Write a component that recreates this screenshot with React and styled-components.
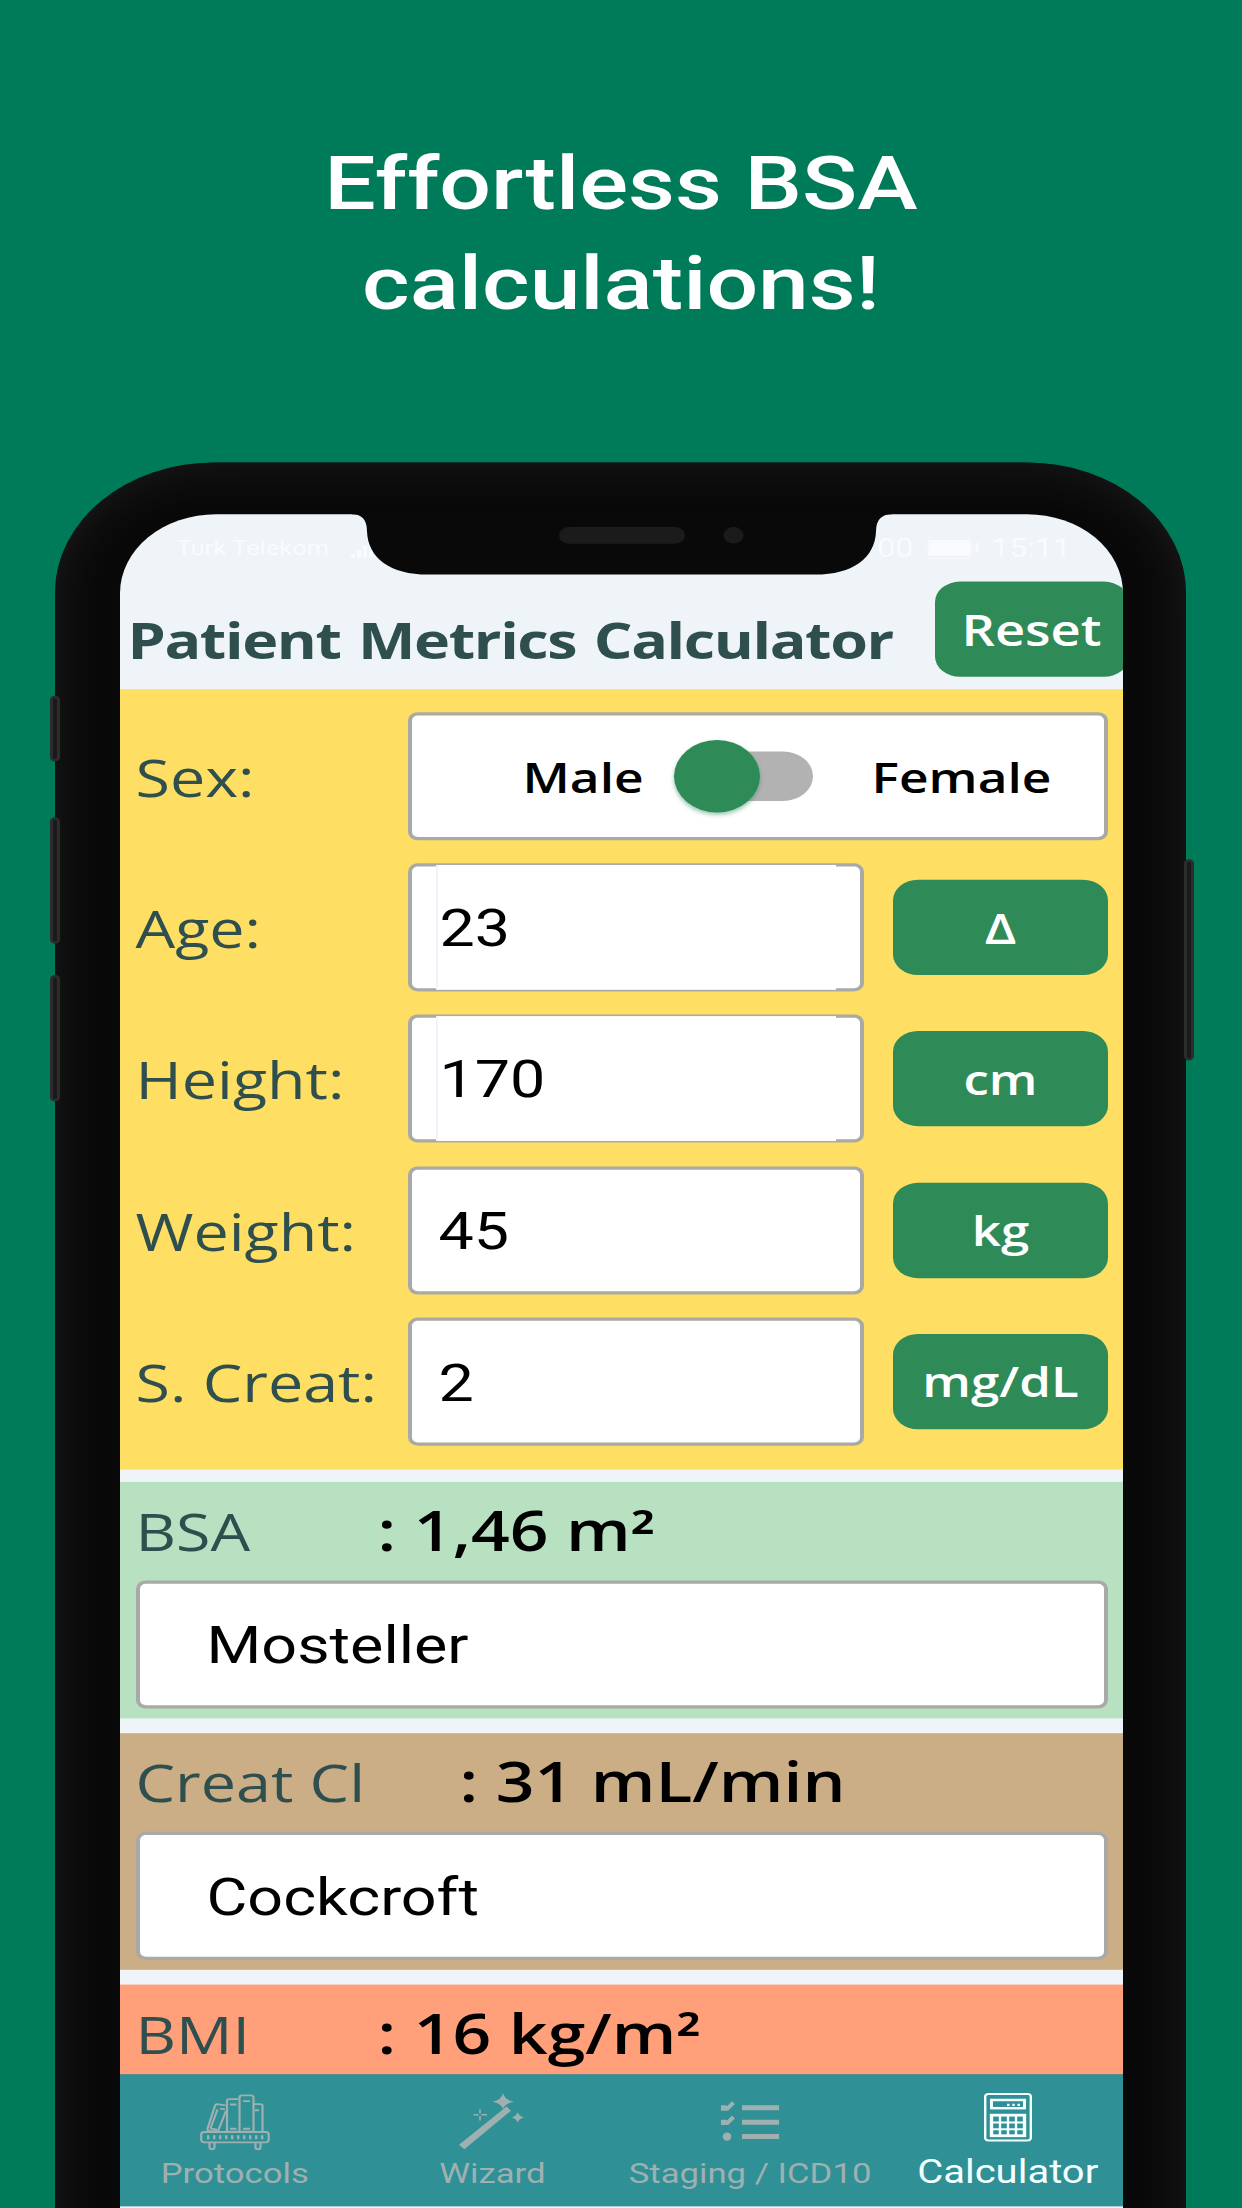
import React from "react";
import styled, { createGlobalStyle } from "styled-components";

const GlobalStyle = createGlobalStyle`
  * { box-sizing: border-box; }
  html, body { margin: 0; padding: 0; background: #007b5a; }
`;

const sans = `"Open Sans", "Noto Sans", sans-serif`;
const roboto = `Roboto, "Liberation Sans", sans-serif`;
const slate = "#2f4f4f";
const green = "#2e8b57";

/* The artwork is laid out at 1242x2688 and squeezed to a 1242x2208 poster. */
const Poster = styled.div`
  width: 1242px;
  height: 2208px;
  overflow: hidden;
  background: #007b5a;
`;

const Artwork = styled.main`
  width: 1242px;
  height: 2688px;
  display: flex;
  flex-direction: column;
  transform: scaleY(0.82143);
  transform-origin: 0 0;
  overflow: hidden;
`;

const Headline = styled.h1`
  flex: none;
  margin: 0;
  height: 563px;
  padding-top: 162px;
  font: 500 91.2px/122px ${roboto};
  color: #fff;
  text-align: center;
  white-space: nowrap;
`;

const Phone = styled.section`
  position: relative;
  flex: none;
  width: 1131px;
  height: 2300px;
  margin-left: 54.5px;
  padding: 63px 62px 0 65px;
  border-radius: 159px 159px 0 0;
  background: #090909;
  box-shadow: inset 0 0 50px 2px #1c1c1c;
`;

const SideKey = styled.i`
  position: absolute;
  ${(p) => (p.$right ? "right: -8px;" : "left: -5px;")}
  top: ${(p) => p.$top}px;
  width: 10px;
  height: ${(p) => p.$h}px;
  border: 3px solid #2c2c2c;
  border-radius: 6px;
  background: #1a1a1a;
`;

const Notch = styled.svg`
  position: absolute;
  left: 297.5px;
  top: 62px;
  width: 540px;
  height: 76px;
`;

const Screen = styled.div`
  display: flex;
  flex-direction: column;
  width: 1003.5px;
  height: 2070px;
  border-radius: 96px 96px 0 0;
  background: #eff4f9;
  overflow: hidden;
`;

const StatusBar = styled.div`
  display: flex;
  align-items: center;
  flex: none;
  height: 82px;
  padding: 18px 52px 18px 57px;
  font: 25.5px/30px ${roboto};
  color: #f9fbfe;
`;

const Signal = styled.svg`
  margin-left: 22px;
`;

const Clock = styled.span`
  display: flex;
  align-items: center;
  gap: 12px;
  margin-left: auto;
  font-size: 32px;
`;

const TitleBar = styled.header`
  display: flex;
  flex: none;
  height: 131px;
  padding-left: 8px;
`;

const Title = styled.h2`
  flex: none;
  width: 807px;
  margin: 0;
  padding-top: 39px;
  font: 700 61px/64px ${sans};
  letter-spacing: -1.4px;
  word-spacing: 3px;
  color: ${slate};
  white-space: nowrap;
`;

const Button = styled.button`
  flex: none;
  width: ${(p) => p.$w || 215}px;
  height: 116px;
  padding: 0;
  border: 0;
  border-radius: 25px;
  background: ${green};
  color: #fff;
  font: 600 ${(p) => p.$size || 51}px/1 ${sans};
`;

const Form = styled.div`
  display: grid;
  grid-template-columns: 272px 456px 1fr;
  grid-auto-rows: 156px;
  row-gap: 28.2px;
  align-items: center;
  flex: none;
  height: 950px;
  padding: 28px 15px 0 16px;
  background: #ffde64;
`;

const Label = styled.label`
  padding-top: 2px;
  font: 62.8px/84px ${sans};
  color: ${slate};
  white-space: nowrap;
`;

const Field = styled.div`
  display: flex;
  align-items: center;
  height: 156px;
  padding: ${(p) => p.$drop ?? 4}px 0 0 ${(p) => p.$pad ?? 27}px;
  border: 4px solid #a9a9a5;
  border-radius: 10px;
  background: #fff;
  color: #000;
  font: 62.8px/80px ${roboto};
  ${(p) => p.$wide && "grid-column: span 2;"}
`;

const TextInput = styled.div`
  display: flex;
  align-items: center;
  align-self: stretch;
  width: 400px;
  margin: -2px 0 -2px 24px;
  padding: 4px 0 0 2px;
  border-left: 2px solid #eef4fb;
  background: #fff;
`;

const UnitCell = styled.div`
  display: flex;
  justify-content: flex-end;
`;

const SexName = styled.span`
  font: 600 51.4px/70px ${sans};
`;

const Track = styled.span`
  display: flex;
  align-items: center;
  width: 125px;
  height: 60px;
  margin: 0 59px 0 44px;
  border-radius: 30px;
  background: #b2b2b2;
`;

const Thumb = styled.span`
  flex: none;
  width: 86px;
  height: 88px;
  margin-left: -14px;
  border-radius: 50%;
  background: ${green};
  box-shadow: 0 3px 5px rgba(46, 139, 87, 0.5);
`;

const Result = styled.section`
  flex: none;
  height: ${(p) => p.$h}px;
  margin-top: ${(p) => p.$gap}px;
  padding: 0 15px 0 16px;
  background: ${(p) => p.$bg};
`;

const ResultLine = styled.div`
  display: flex;
  align-items: baseline;
  height: 120px;
  padding-top: 13px;
`;

const ResultLabel = styled(Label)`
  width: ${(p) => p.$w}px;
  padding: 0;
`;

const ResultValue = styled.strong`
  font: 600 67.8px/90px ${sans};
  white-space: nowrap;
  color: #000;
`;

const Power = styled.span`
  line-height: 0;
  vertical-align: -7px;
`;

const TabBar = styled.nav`
  position: relative;
  display: grid;
  grid-template-columns: repeat(4, 1fr);
  flex: none;
  height: 161px;
  margin: 0 -13.5px;
  background: #2f9096;
  border-top: 1px solid #5b8a86;
`;

const Tab = styled.a`
  display: flex;
  flex-direction: column;
  align-items: center;
  padding-top: 22px;
  color: ${(p) => (p.$active ? "#f4ffff" : "#9fb0b0")};
  font: ${(p) => (p.$active ? 40 : 34.7)}px/46px ${roboto};
  white-space: nowrap;

  svg {
    display: block;
    height: 70px;
    margin-bottom: 4px;
  }
`;

const Books = () => (
  <svg width="70" height="70" viewBox="0 0 70 70" fill="none" stroke="currentColor" strokeWidth="2.2">
    <rect x="1.2" y="47.5" width="67.5" height="12.5" rx="3" />
    <path d="M7 53.8H64" strokeWidth="5" strokeDasharray="2.4 3.6" />
    <path d="M9.5 60v6a2.5 2.5 0 0 0 5 0V60M55.5 60v6a2.5 2.5 0 0 0 5 0V60" />
    <path d="M27 47V9.500a2 2 0 0 1 2-2H38M27 47H54M39.500 47V5.500a2.500 2.500 0 0 1 2.500-2.500h9a2.500 2.500 0 0 1 2.500 2.500V47M54 13.500h6.500a2 2 0 0 1 2 2V47M30 14h6.500M30 43.500h6.500M43 10h7M43 43.500h7M55 21h4" />
    <path d="M17 13.500l8.500 1.500M17 13.500q-1.500 0-2 2L7.500 43.500q0 2.500 2 3H18L26 22M17.500 20L10.500 43M20 19l5 1M10 43l7 1.500" />
  </svg>
);

const Wand = () => (
  <svg width="66" height="70" viewBox="0 0 66 70" fill="currentColor">
    <path d="M0 63L47.500 16.500 52 21.500 5.300 68.500Z" />
    <path d="M44 0Q45.500 8.500 55 10.600Q45.500 12.500 44 20Q42.500 12.500 33.500 10.600Q42.500 8.500 44 0Z" />
    <path d="M58.700 23.500Q60 28.500 65 29.700Q60 31 58.700 36Q57.400 31 52.700 29.700Q57.400 28.500 58.700 23.500Z" />
    <path d="M21 20v5M21 28v5.500M14.500 26.500h5M22.500 26.500h5.500" stroke="currentColor" strokeWidth="1.600" />
  </svg>
);

const Checklist = () => (
  <svg width="58" height="70" viewBox="0 0 58 70" fill="currentColor">
    <path d="M21 15h37v6H21zM21 32.500h37v6H21zM21 50h37v6H21z" />
    <path d="M0 15h5l1 1 5-6 3 3.500L7 21.500H0zM0 32.500h5l1 1 5-6 3 3.500L7 39H0z" />
    <ellipse cx="6" cy="53" rx="4.300" ry="5" />
  </svg>
);

const Calc = () => (
  <svg width="48" height="70" viewBox="0 0 48 70" fill="none" stroke="currentColor">
    <rect x="1.200" y="1.200" width="45.600" height="56.600" rx="3" strokeWidth="2.400" />
    <rect x="7.500" y="8.500" width="33" height="10" strokeWidth="3" />
    <path d="M23 14.500h13" strokeWidth="2.600" strokeDasharray="2.600 2.600" />
    <rect x="7.500" y="27" width="33" height="25" strokeWidth="3.400" />
    <path d="M16 27v26M24 27v26M32 27v26M8 36h32M8 44h32" strokeWidth="2.400" />
  </svg>
);

const measures = [
  { label: "Age:", value: "23", unit: "Δ", editable: true },
  { label: "Height:", value: "170", unit: "cm", editable: true },
  { label: "Weight:", value: "45", unit: "kg" },
  { label: "S. Creat:", value: "2", unit: "mg/dL" },
];

const results = [
  { label: "BSA", value: ": 1,46 m", power: "²", formula: "Mosteller", bg: "#b7e1c0", h: 288, gap: 15, w: 242 },
  { label: "Creat Cl", value: ": 31 mL/min", formula: "Cockcroft", bg: "#cbae85", h: 288, gap: 18, w: 324 },
  { label: "BMI", value: ": 16 kg/m", power: "²", bg: "#ffa07a", h: 108.5, gap: 18, w: 242 },
];

export default function App() {
  return (
    <Poster>
      <GlobalStyle />
      <Artwork>
        <Headline>
          Effortless BSA
          <br />
          calculations!
        </Headline>
        <Phone>
          <SideKey $top={284} $h={80} />
          <SideKey $top={432} $h={154} />
          <SideKey $top={624} $h={154} />
          <SideKey $right $top={483} $h={245} />
          <Screen>
            <StatusBar>
              Turk Telekom
              <Signal width="30" height="24" viewBox="0 0 30 24" fill="currentColor">
                <path d="M0 20h4v4H0zM6 15h4v9H6zM12 9h4v15h-4zM18 3h4v21h-4z" />
              </Signal>
              <Clock>
                00
                <svg width="54" height="28" viewBox="0 0 54 28" fill="none" stroke="currentColor">
                  <rect x="1" y="1" width="46" height="26" rx="5" opacity=".6" />
                  <rect x="4" y="5" width="41" height="18" fill="currentColor" />
                  <path d="M52 8v12" strokeWidth="3" />
                </svg>
                15:11
              </Clock>
            </StatusBar>
            <TitleBar>
              <Title>Patient Metrics Calculator</Title>
              <Button $w={194} $size={52.4}>Reset</Button>
            </TitleBar>
            <Form>
              <Label>Sex:</Label>
              <Field $wide $pad={111} $drop={0}>
                <SexName>Male</SexName>
                <Track><Thumb /></Track>
                <SexName>Female</SexName>
              </Field>
              {measures.map(({ label, value, unit, editable }) => (
                <React.Fragment key={label}>
                  <Label>{label}</Label>
                  {editable ? (
                    <Field $pad={0} $drop={0}><TextInput>{value}</TextInput></Field>
                  ) : (
                    <Field>{value}</Field>
                  )}
                  <UnitCell><Button>{unit}</Button></UnitCell>
                </React.Fragment>
              ))}
            </Form>
            {results.map((r) => (
              <Result key={r.label} $h={r.h} $gap={r.gap} $bg={r.bg}>
                <ResultLine>
                  <ResultLabel as="span" $w={r.w}>{r.label}</ResultLabel>
                  <ResultValue>{r.value}{r.power && <Power>{r.power}</Power>}</ResultValue>
                </ResultLine>
                {r.formula && <Field $pad={67}>{r.formula}</Field>}
              </Result>
            ))}
            <TabBar>
              <Tab><Books />Protocols</Tab>
              <Tab><Wand />Wizard</Tab>
              <Tab><Checklist />Staging / ICD10</Tab>
              <Tab $active><Calc />Calculator</Tab>
            </TabBar>
          </Screen>
          <Notch viewBox="0 0 540 76">
            <path fill="#090909" d="M0 0H540V1Q524 1 524 22C523 54 501 74.500 463 74.500H76C38 74.500 16 54 15 22Q15 1 0 1Z" />
            <rect x="207" y="16.500" width="126" height="20.500" rx="10.200" fill="#1b1b1b" />
            <circle cx="381.500" cy="26.700" r="10.100" fill="#1b1b1b" />
          </Notch>
        </Phone>
      </Artwork>
    </Poster>
  );
}
